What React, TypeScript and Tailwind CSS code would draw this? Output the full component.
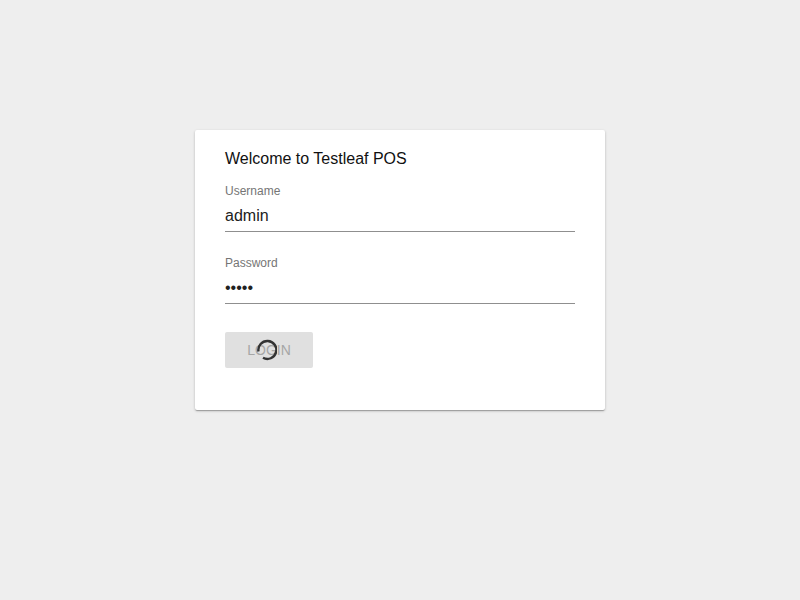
export default function App() {
  return (
    <div className="min-h-screen bg-[#eeeeee] pt-[130px] font-['Liberation_Sans',Arial,sans-serif]">
      <div className="mx-auto flex w-[410px] flex-col rounded-[2px] bg-white px-[30px] pt-[17px] pb-[42px] shadow-[0_1px_3px_rgba(0,0,0,0.2),0_1px_1px_rgba(0,0,0,0.14),0_2px_1px_-1px_rgba(0,0,0,0.12)]">
        <h1 className="text-[16px] leading-[24px] text-[#111]">Welcome to Testleaf POS</h1>

        <div className="mt-[13px] flex flex-col">
          <label className="text-[12px] leading-[14px] text-[#757575]">Username</label>
          <div className="mt-[2px] flex h-[32px] items-center border-b border-[#8f8f8f] text-[16px] text-[#212121]">
            admin
          </div>
        </div>

        <div className="mt-[24px] flex flex-col">
          <label className="text-[12px] leading-[14px] text-[#757575]">Password</label>
          <div className="mt-[2px] flex h-[32px] items-center border-b border-[#8f8f8f] text-[16px] text-[#212121]">
            •••••
          </div>
        </div>

        <div className="mt-[28px]">
          <button className="relative flex h-[36px] w-[88px] items-center justify-center rounded-[2px] bg-[#e0e0e0] text-[14px] uppercase text-[#a6a6a6]">
            Login
            <svg
              className="absolute left-[28px] top-[5px]"
              width="24"
              height="24"
              viewBox="0 0 24 24"
            >
              <path
                d="M5.5 14.5 A9 9 0 1 1 10 20.8"
                fill="none"
                stroke="#333"
                strokeWidth="2.4"
                strokeLinecap="butt"
              />
            </svg>
          </button>
        </div>
      </div>
    </div>
  );
}
